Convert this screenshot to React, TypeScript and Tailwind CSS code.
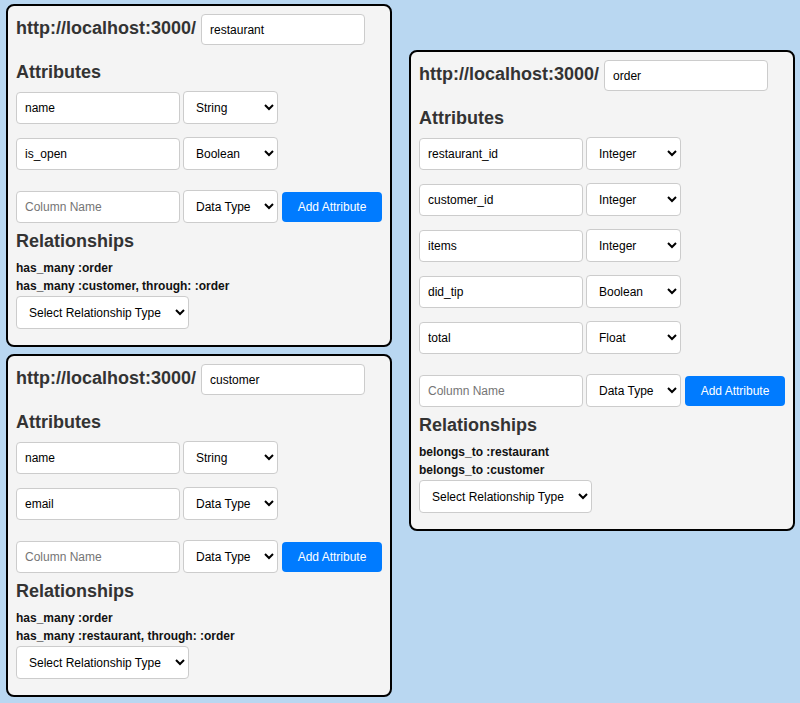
import React from "react";

type Model = {
  name: string;
  attrs: [string, string][];
  rels: string[];
};

const leftModels: Model[] = [
  {
    name: "restaurant",
    attrs: [
      ["name", "String"],
      ["is_open", "Boolean"],
    ],
    rels: ["has_many :order", "has_many :customer, through: :order"],
  },
  {
    name: "customer",
    attrs: [
      ["name", "String"],
      ["email", "Data Type"],
    ],
    rels: ["has_many :order", "has_many :restaurant, through: :order"],
  },
];

const orderModel: Model = {
  name: "order",
  attrs: [
    ["restaurant_id", "Integer"],
    ["customer_id", "Integer"],
    ["items", "Integer"],
    ["did_tip", "Boolean"],
    ["total", "Float"],
  ],
  rels: ["belongs_to :restaurant", "belongs_to :customer"],
};

const dataTypes = ["Data Type", "String", "Integer", "Boolean", "Float", "Text", "Date"];

const inputCls =
  "w-[164px] h-[32px] px-2 bg-white border border-[#ccc] rounded-[4px] text-[12px] text-black placeholder:text-[#757575] outline-none";
const selectCls =
  "h-[33px] pl-2 pr-1 bg-white border border-[#ccc] rounded-[4px] text-[12px] text-black outline-none";

function TypeSelect({ value }: { value: string }) {
  return (
    <select defaultValue={value} className={`${selectCls} w-[95px] ml-[3px]`}>
      {dataTypes.map((t) => (
        <option key={t} value={t}>
          {t}
        </option>
      ))}
    </select>
  );
}

function ModelCard({ model }: { model: Model }) {
  return (
    <div className="w-[386px] bg-[#f4f4f4] border-2 border-black rounded-[8px] px-2 pt-2 pb-[16px]">
      <div className="flex items-baseline">
        <span className="text-[18px] leading-[21px] font-bold text-[#333]">
          http://localhost:3000/
        </span>
        <input
          defaultValue={model.name}
          className="ml-[5px] w-[164px] h-[31px] px-2 bg-white border border-[#ccc] rounded-[4px] text-[12px] text-black outline-none"
        />
      </div>

      <h3 className="mt-[17px] mb-[8px] text-[18px] leading-[21px] font-bold text-[#333]">
        Attributes
      </h3>

      <div className="flex flex-col gap-[13px]">
        {model.attrs.map(([col, type]) => (
          <div key={col} className="flex items-center">
            <input defaultValue={col} className={inputCls} />
            <TypeSelect value={type} />
          </div>
        ))}
      </div>

      <div className="flex items-center mt-[20px]">
        <input placeholder="Column Name" className={inputCls} />
        <TypeSelect value="Data Type" />
        <button className="ml-[4px] w-[100px] h-[30px] bg-[#007bff] text-white text-[12px] rounded-[4px]">
          Add Attribute
        </button>
      </div>

      <h3 className="mt-[8px] mb-[7px] text-[18px] leading-[21px] font-bold text-[#333]">
        Relationships
      </h3>

      {model.rels.map((r) => (
        <div key={r} className="text-[12px] leading-[18px] font-bold text-[#111]">
          {r}
        </div>
      ))}

      <select
        defaultValue=""
        className={`${selectCls} w-[173px] mt-[1px]`}
      >
        <option value="">Select Relationship Type</option>
        <option value="has_many">has_many</option>
        <option value="belongs_to">belongs_to</option>
        <option value="has_one">has_one</option>
      </select>
    </div>
  );
}

export default function App() {
  return (
    <div className="min-h-[703px] w-full bg-[#b9d7f1] font-['Liberation_Sans',Arial,sans-serif]">
      <div className="flex items-start pl-[6px] pt-[4px]">
        <div className="flex flex-col gap-[7px]">
          {leftModels.map((m) => (
            <ModelCard key={m.name} model={m} />
          ))}
        </div>
        <div className="ml-[17px] mt-[46px]">
          <ModelCard model={orderModel} />
        </div>
      </div>
    </div>
  );
}
